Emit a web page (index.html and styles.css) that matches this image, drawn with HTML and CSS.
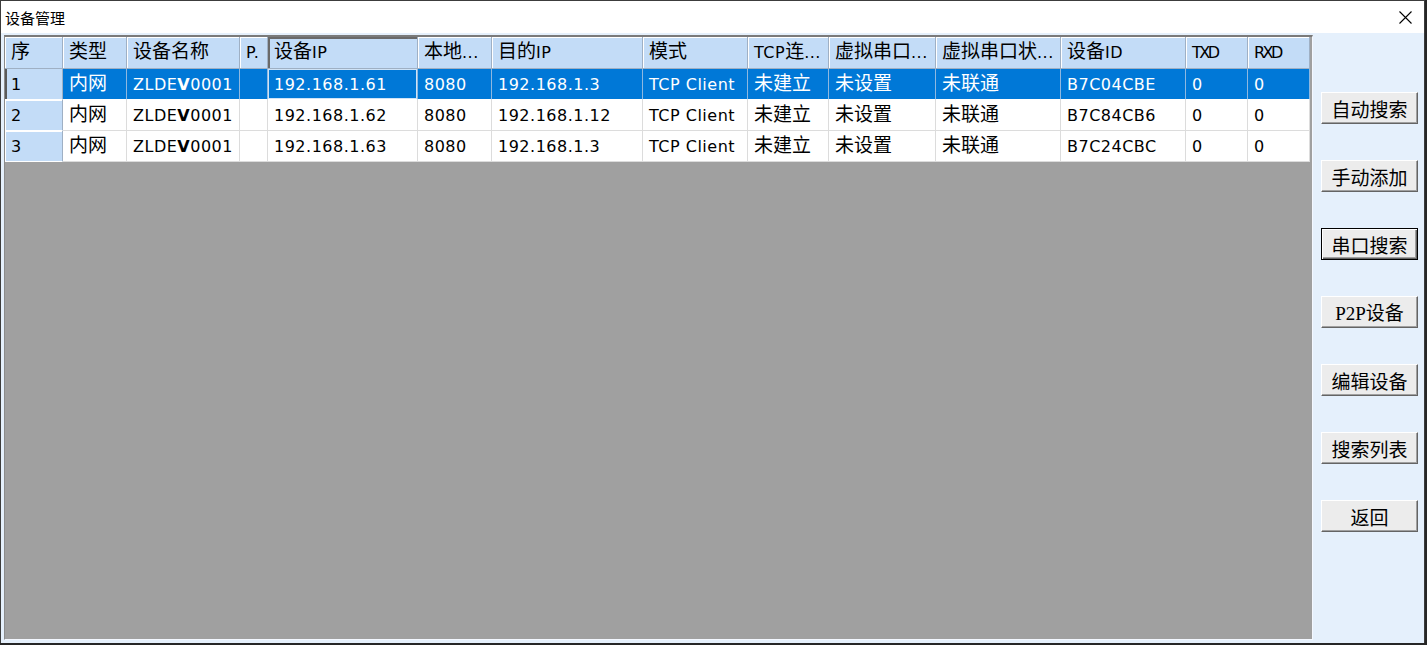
FILE: index.html
```html
<!DOCTYPE html>
<html lang="zh">
<head>
<meta charset="utf-8">
<title>设备管理</title>
<link rel="stylesheet" href="styles.css">
</head>
<body>
<div class="window">
  <div class="titlebar">
    <span class="title">设备管理</span>
    <span class="close" aria-label="关闭">
      <svg width="13" height="13" viewBox="0 0 13 13"><path d="M0.5 0.5 L12.5 12.5 M12.5 0.5 L0.5 12.5" stroke="#000" stroke-width="1.1" fill="none"/></svg>
    </span>
  </div>
  <div class="client">
    <div class="listview">
      <div class="row head">
        <div class="cell"><span class="zh">序</span></div>
        <div class="cell"><span class="zh">类型</span></div>
        <div class="cell"><span class="zh">设备名称</span></div>
        <div class="cell">P.</div>
        <div class="cell sorted"><span class="zh">设备</span>IP</div>
        <div class="cell"><span class="zh">本地</span>...</div>
        <div class="cell"><span class="zh">目的</span>IP</div>
        <div class="cell"><span class="zh">模式</span></div>
        <div class="cell">TCP<span class="zh">连</span>...</div>
        <div class="cell"><span class="zh">虚拟串口</span>...</div>
        <div class="cell"><span class="zh">虚拟串口状</span>...</div>
        <div class="cell"><span class="zh">设备</span>ID</div>
        <div class="cell tight">TXD</div>
        <div class="cell tight">RXD</div>
      </div>
      <div class="row sel">
        <div class="cell idx focus">1</div>
        <div class="cell"><span class="zh">内网</span></div>
        <div class="cell">ZLDE<b>V</b>0001</div>
        <div class="cell"></div>
        <div class="cell cur">192.168.1.61</div>
        <div class="cell">8080</div>
        <div class="cell">192.168.1.3</div>
        <div class="cell">TCP Client</div>
        <div class="cell"><span class="zh">未建立</span></div>
        <div class="cell"><span class="zh">未设置</span></div>
        <div class="cell"><span class="zh">未联通</span></div>
        <div class="cell">B7C04CBE</div>
        <div class="cell">0</div>
        <div class="cell">0</div>
      </div>
      <div class="row">
        <div class="cell idx">2</div>
        <div class="cell"><span class="zh">内网</span></div>
        <div class="cell">ZLDE<b>V</b>0001</div>
        <div class="cell"></div>
        <div class="cell">192.168.1.62</div>
        <div class="cell">8080</div>
        <div class="cell">192.168.1.12</div>
        <div class="cell">TCP Client</div>
        <div class="cell"><span class="zh">未建立</span></div>
        <div class="cell"><span class="zh">未设置</span></div>
        <div class="cell"><span class="zh">未联通</span></div>
        <div class="cell">B7C84CB6</div>
        <div class="cell">0</div>
        <div class="cell">0</div>
      </div>
      <div class="row">
        <div class="cell idx">3</div>
        <div class="cell"><span class="zh">内网</span></div>
        <div class="cell">ZLDE<b>V</b>0001</div>
        <div class="cell"></div>
        <div class="cell">192.168.1.63</div>
        <div class="cell">8080</div>
        <div class="cell">192.168.1.3</div>
        <div class="cell">TCP Client</div>
        <div class="cell"><span class="zh">未建立</span></div>
        <div class="cell"><span class="zh">未设置</span></div>
        <div class="cell"><span class="zh">未联通</span></div>
        <div class="cell">B7C24CBC</div>
        <div class="cell">0</div>
        <div class="cell">0</div>
      </div>
    </div>
    <div class="side">
      <button class="btn">自动搜索</button>
      <button class="btn">手动添加</button>
      <button class="btn default">串口搜索</button>
      <button class="btn"><span class="latin">P2P</span>设备</button>
      <button class="btn">编辑设备</button>
      <button class="btn">搜索列表</button>
      <button class="btn">返回</button>
    </div>
  </div>
</div>
</body>
</html>
```

FILE: styles.css
```css
html, body {
  margin: 0;
  padding: 0;
}
body {
  width: 1427px;
  height: 645px;
  overflow: hidden;
  background: #262626;
}
.window {
  width: 1423px;
  border: 1px solid #3c3c3c;
  border-bottom: none;
  background: #fff;
}
.titlebar {
  height: 32px;
  display: flex;
  align-items: center;
  justify-content: space-between;
  padding-left: 4px;
  background: #fff;
}
.title {
  font: 15px "Noto Sans CJK SC", sans-serif;
  color: #000;
  line-height: 1;
  margin-top: 1px;
}
.close {
  width: 13px;
  height: 13px;
  margin-right: 12px;
  display: flex;
}
.client {
  height: 610px;
  box-sizing: border-box;
  background: #e5f0fc;
  display: flex;
  align-items: flex-start;
  padding: 2px 0 0 3px;
}
.listview {
  width: 1309px;
  height: 605px;
  box-sizing: border-box;
  background: #a0a0a0;
  border-style: solid;
  border-width: 2px 1px 1px 1px;
  border-color: #7a7a7a #f4f8ff #f4f8ff #8a8a8a;
  overflow: hidden;
}
.row {
  display: grid;
  grid-template-columns: 58px 64px 113px 28px 150px 74px 151px 105px 81px 107px 125px 125px 62px 62px;
  width: max-content;
  height: 31px;
  background: #fff;
}
.cell {
  box-sizing: border-box;
  border-right: 1px solid #dcdcdc;
  border-bottom: 1px solid #dcdcdc;
  padding: 1px 0 0 6px;
  white-space: nowrap;
  overflow: hidden;
  font: 16px "DejaVu Sans", "Noto Sans CJK SC", sans-serif;
  line-height: 30px;
  letter-spacing: 0.5px;
  color: #000;
}
.cell b {
  font-weight: bold;
}
.zh {
  font-family: "Noto Sans CJK SC", sans-serif;
  font-size: 19px;
  line-height: 1;
  letter-spacing: 0;
}
.head {
  height: 32px;
}
.head .cell {
  background: #c3dcf7;
  border-right-color: #9fb0c4;
  border-bottom-color: #9fb0c4;
  box-shadow: inset 1px 1px #ffffff;
}
.head .cell.sorted {
  box-shadow: inset 2px 2px #6a6a6a;
}
.head .cell.tight {
  letter-spacing: -2.5px;
}
.cell.idx {
  background: #c3dcf7;
  border-right-color: #9fb0c4;
  border-bottom-color: #ffffff;
  box-shadow: inset 1px 1px #ffffff;
}
.sel .cell {
  background: #0078d7;
  color: #fff;
  border-right-color: #8fb8e0;
  border-bottom-color: #ffffff;
}
.sel .cell.idx {
  background: #c3dcf7;
  color: #000;
  border-right-color: #9fb0c4;
  box-shadow: inset 2px 0 #5a5a5a;
}
.sel .cell.cur {
  box-shadow: inset 0 0 0 1px #cfe3f7;
}
.side {
  display: flex;
  flex-direction: column;
  gap: 36px;
  padding: 57px 0 0 8px;
}
.btn {
  width: 97px;
  height: 32px;
  box-sizing: border-box;
  margin: 0;
  padding: 0;
  background: #ececec;
  border: 1px solid;
  border-color: #ffffff #646464 #646464 #ffffff;
  box-shadow: inset -1px -1px #a0a0a0;
  font: 19px "Noto Sans CJK SC", sans-serif;
  color: #000;
  line-height: 1;
}
.btn.default {
  border-color: #000;
  box-shadow: inset 1px 1px #ffffff, inset -1px -1px #646464, inset -2px -2px #a0a0a0;
}
.latin {
  font-family: "Liberation Serif", serif;
  font-size: 19px;
}
```
